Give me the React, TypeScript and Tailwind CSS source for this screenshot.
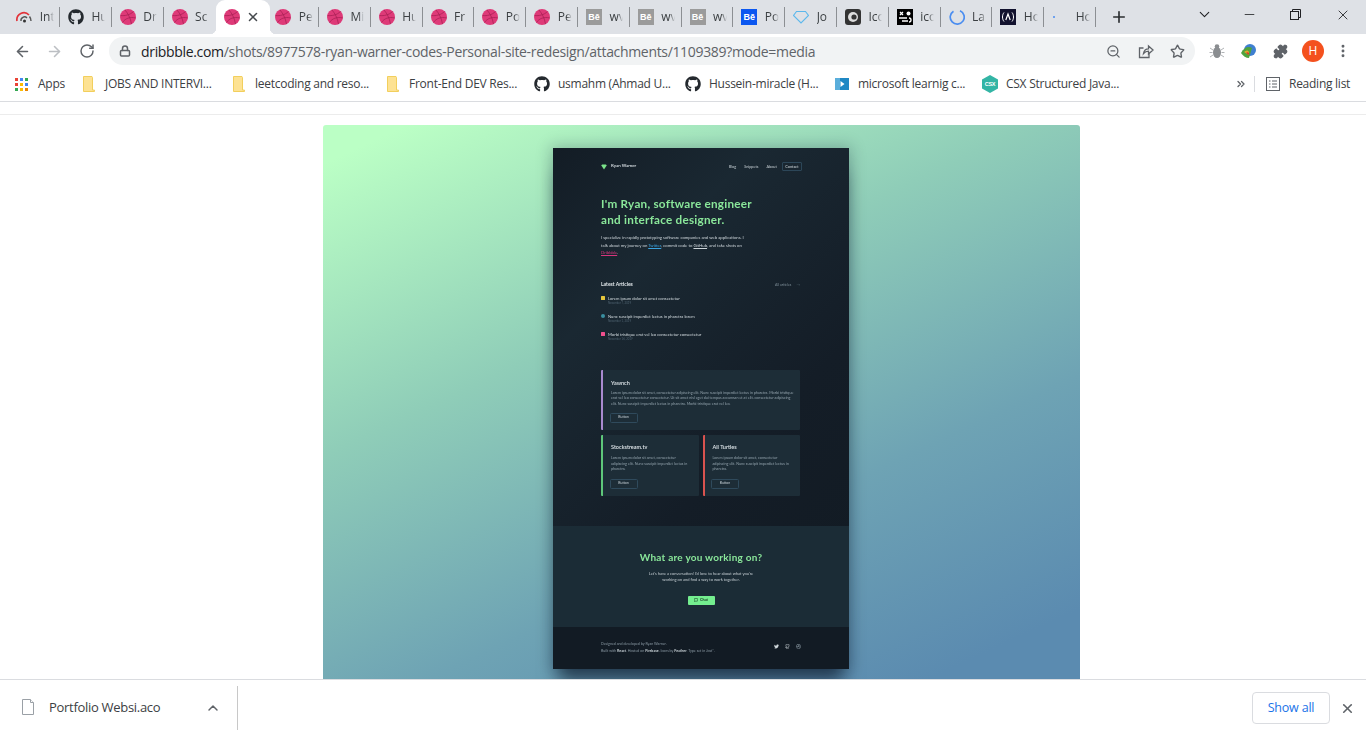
import React from "react";
import { FaGithub, FaTwitter, FaDribbble } from "react-icons/fa";
import { ArrowLeft, ArrowRight, RotateCw, Lock, ZoomOut, Star, Puzzle, MoreVertical, ChevronDown, ChevronUp, Minus, X, Plus, ChevronsRight, MessageSquare, Github } from "lucide-react";

const Dribbble = () => (
  <svg width="16" height="16" viewBox="0 0 16 16" className="shrink-0">
    <circle cx="8" cy="8" r="8" fill="#de3a78" />
    <g fill="none" stroke="#a92155" strokeWidth="0.8">
      <path d="M5 1C8 4.5 10.5 9 11.5 15" />
      <path d="M.5 6.5C5 7 10 6 13.5 2.5" />
      <path d="M2.5 13.5C5 9.5 10 7.5 15.8 9" />
    </g>
  </svg>
);
const Be = ({ bg }: { bg: string }) => (
  <span style={{ backgroundColor: bg }} className="w-4 h-4 shrink-0 flex items-center justify-center text-white text-[9px] font-bold leading-none font-['Liberation_Sans',sans-serif]">Bē</span>
);
const Gauge = () => (
  <svg width="16" height="16" viewBox="0 0 16 16" className="shrink-0">
    <path d="M1 12A7 7 0 0 1 13 6" fill="none" stroke="#e2333a" strokeWidth="1.7" />
    <path d="M5 12A3.5 3.5 0 0 1 11 9M13.5 7.5A7 7 0 0 1 15 12" fill="none" stroke="#555" strokeWidth="1.4" />
    <circle cx="8.5" cy="12" r="1.5" fill="#333" />
  </svg>
);
const Gh = ({ s = 16 }: { s?: number }) => <FaGithub size={s} color="#24292e" className="shrink-0" />;
const Diamond = () => (
  <svg width="16" height="16" viewBox="0 0 16 16" className="shrink-0">
    <path d="M3.5 2.5h9L15.5 6.5 8 14 .5 6.5z" fill="none" stroke="#5cb8ec" strokeWidth="1.1" />
  </svg>
);
const IcoDark = () => (
  <svg width="16" height="16" viewBox="0 0 16 16" className="shrink-0">
    <rect width="16" height="16" rx="3" fill="#333" />
    <circle cx="8" cy="8" r="5" fill="#ddd" />
    <circle cx="9" cy="8" r="2.6" fill="#333" />
  </svg>
);
const IcoBlack = () => (
  <svg width="16" height="16" viewBox="0 0 16 16" className="shrink-0">
    <rect width="16" height="16" fill="#000" />
    <path d="M3 3l3 3M6 3L3 6M2 9h8M5 12h6" stroke="#fff" strokeWidth="1.3" />
    <circle cx="11.5" cy="4.5" r="2" fill="#fff" />
    <path d="M12 9a2 2 0 0 1 0 4" stroke="#fff" strokeWidth="1.3" fill="none" />
  </svg>
);
const Spinner = () => (
  <svg width="16" height="16" viewBox="0 0 16 16" className="shrink-0">
    <path d="M4.5 2.2A7 7 0 1 0 11 1.7" fill="none" stroke="#4a8df0" strokeWidth="1.7" />
  </svg>
);
const Ho = () => (
  <svg width="16" height="16" viewBox="0 0 16 16" className="shrink-0">
    <rect width="16" height="16" fill="#12122e" />
    <path d="M4 3.5C2 6 2 10 4 12.5M12 3.5C14 6 14 10 12 12.5" stroke="#fff" fill="none" strokeWidth="1" />
    <path d="M5.8 11L8 5l2.2 6" stroke="#fff" fill="none" strokeWidth="1.2" />
  </svg>
);
const Dot = () => (
  <span className="w-4 h-4 shrink-0 flex items-center pl-px">
    <span className="w-[2px] h-[2px] rounded-full bg-[#4a8df0]" />
  </span>
);

const tabs: { icon: React.ReactNode; label: string }[] = [
  { icon: <Gauge />, label: "Int" },
  { icon: <Gh />, label: "Hu" },
  { icon: <Dribbble />, label: "Dr" },
  { icon: <Dribbble />, label: "Sc" },
  { icon: <Dribbble />, label: "" },
  { icon: <Dribbble />, label: "Pe" },
  { icon: <Dribbble />, label: "Mi" },
  { icon: <Dribbble />, label: "Hu" },
  { icon: <Dribbble />, label: "Fr" },
  { icon: <Dribbble />, label: "Po" },
  { icon: <Dribbble />, label: "Pe" },
  { icon: <Be bg="#9b9b9b" />, label: "wv" },
  { icon: <Be bg="#9b9b9b" />, label: "wv" },
  { icon: <Be bg="#9b9b9b" />, label: "wv" },
  { icon: <Be bg="#0b57f0" />, label: "Po" },
  { icon: <Diamond />, label: "Jo" },
  { icon: <IcoDark />, label: "Ico" },
  { icon: <IcoBlack />, label: "ico" },
  { icon: <Spinner />, label: "La" },
  { icon: <Ho />, label: "Ho" },
  { icon: <Dot />, label: "Ho" },
];

const Folder = () => (
  <svg width="12" height="16" viewBox="0 0 12 16" className="shrink-0">
    <path d="M.5.5h8.5l.5 1V14l2 .1v1.4H.5z" fill="#fde293" stroke="#f2cf5d" />
  </svg>
);
const AppsIcon = () => (
  <span className="grid grid-cols-3 gap-[2px] w-[13px] shrink-0">
    {["#ea4335", "#4285f4", "#34a853", "#ea4335", "#fbbc05", "#4285f4", "#34a853", "#fbbc05", "#ea8600"].map((c, i) => (
      <span key={i} style={{ backgroundColor: c }} className="w-[3px] h-[3px]" />
    ))}
  </span>
);
const Ms = () => (
  <svg width="14" height="12" viewBox="0 0 14 12" className="shrink-0">
    <rect width="14" height="12" fill="#1f88c4" />
    <rect x="0" y="0" width="5" height="12" fill="#5aaedb" />
    <path d="M5.5 3l4 3-4 3z" fill="#fff" />
  </svg>
);
const Csx = () => (
  <svg width="16" height="18" viewBox="0 0 16 18" className="shrink-0">
    <path d="M8 0l8 4.5v9L8 18l-8-4.5v-9z" fill="#33b5a5" />
    <text x="8" y="11" fontSize="5.5" fontWeight="700" fill="#fff" textAnchor="middle" fontFamily="Liberation Sans">CSX</text>
  </svg>
);

const bookmarks = [
  { icon: <AppsIcon />, label: "Apps", w: "w-[68px]", g: "gap-[10px]" },
  { icon: <Folder />, label: "JOBS AND INTERVI...", w: "w-[150px]", g: "gap-[10px]" },
  { icon: <Folder />, label: "leetcoding and reso...", w: "w-[154px]", g: "gap-[10px]" },
  { icon: <Folder />, label: "Front-End DEV Res...", w: "w-[147px]", g: "gap-[10px]" },
  { icon: <Gh />, label: "usmahm (Ahmad U...", w: "w-[151px]", g: "gap-[8px]" },
  { icon: <Gh />, label: "Hussein-miracle (H...", w: "w-[150px]", g: "gap-[8px]" },
  { icon: <Ms />, label: "microsoft learnig c...", w: "w-[147px]", g: "gap-[9px]" },
  { icon: <Csx />, label: "CSX Structured Java...", w: "w-[254px]", g: "gap-[8px]" },
];

const Btn = () => (
  <span className="w-[28px] h-[9.5px] rounded-[1.5px] border border-[#2f4a5c] flex items-center justify-center text-[3.5px] text-[#c6d0d6]">Button</span>
);

const Card = ({ title, border, tall, children }: { title: string; border: string; tall?: boolean; children: React.ReactNode }) => (
  <div className={`bg-[#1d2d37] rounded-[1px] border-l-2 flex flex-col pl-[6.5px] pr-[3px] ${tall ? "h-[60px] pt-[10px]" : "flex-1 h-[61px] pt-[9.5px]"} ${border}`}>
    <div className="pl-[1.5px] text-[5.5px] leading-[7px] font-semibold text-[#dfe6ea]">{title}</div>
    <div className={`pl-[1.5px] text-[3.7px] leading-[5.5px] text-[#93a3ad] whitespace-nowrap ${tall ? "mt-[3px]" : "mt-[4px]"}`}>{children}</div>
    <div className="mt-auto mb-[7px]"><Btn /></div>
  </div>
);

const Article = ({ color, round, title, date }: { color: string; round?: boolean; title: string; date: string }) => (
  <div className="flex flex-col h-[18px]">
    <div className="flex items-center gap-[3px]">
      <span style={{ backgroundColor: color }} className={`w-[4px] h-[4px] ${round ? "rounded-full" : "rounded-[0.5px]"}`} />
      <span className="text-[4.15px] leading-[5px] text-[#d5dde1]">{title}</span>
    </div>
    <div className="text-[2.8px] leading-[4px] text-[#506472] pl-[7px] mt-[0.5px]">{date}</div>
  </div>
);

const Mock = () => (
  <div className="w-[296px] h-[521px] shrink-0 mt-[23px] mr-[1px] flex flex-col shadow-[0_18px_16px_-6px_rgba(15,30,50,0.7),0_0_14px_2px_rgba(15,30,50,0.25)] font-['Lato',sans-serif] blur-[0.4px] overflow-hidden bg-[linear-gradient(135deg,#131c25_0%,#1a2832_25%,#141d27_60%,#111a22_100%)]">
    <div className="h-[378px] pl-[48px] pr-[47px] flex flex-col">
      <div className="flex items-center h-[9px] mt-[14px]">
        <svg width="6" height="6" viewBox="0 0 6 6"><path d="M.2 1.2L1.2.4h3.6l1 .8L3 5.6z" fill="#7be38a" /></svg>
        <span className="text-[4.4px] font-semibold text-[#dde4e8] ml-[4px]">Ryan Warner</span>
        <span className="text-[3.8px] text-[#c5ced3] ml-auto">Blog</span>
        <span className="text-[3.8px] text-[#c5ced3] ml-[8px]">Snippets</span>
        <span className="text-[3.8px] text-[#c5ced3] ml-[8px]">About</span>
        <span className="text-[3.8px] text-[#d5dde1] ml-[5px] px-[2.5px] h-[9px] flex items-center rounded-[1px] border border-[#2c4658]">Contact</span>
      </div>
      <h1 className="mt-[25px] text-[11.7px] leading-[15.5px] font-bold tracking-[0.25px] text-[#8ae79a] whitespace-nowrap">
        I'm Ryan, software engineer<br />and interface designer.
      </h1>
      <p className="mt-[7px] text-[4.25px] leading-[7.6px] text-[#cdd5da] whitespace-nowrap">
        I specialize in rapidly prototyping software companies and web applications. I<br />
        talk about my journey on <span className="text-[#3aa3e0] underline">Twitter</span>, commit code to{" "}
        <span className="underline">GitHub</span>, and take shots on<br />
        <span className="text-[#d6357c] underline">Dribbble</span>.
      </p>
      <div className="flex items-center mt-[25px] h-[6px] pr-[2px]">
        <span className="text-[5px] font-bold text-[#e3e9ec]">Latest Articles</span>
        <span className="text-[3.6px] text-[#7e8e98] ml-auto">All articles</span>
        <span className="text-[3.6px] text-[#4e5f6b] ml-[5px]">→</span>
      </div>
      <div className="flex flex-col mt-[8px]">
        <Article color="#e6c63c" title="Lorem ipsum dolor sit amet consectetur" date="November 7, 2019" />
        <Article color="#3a8fa0" round title="Nunc suscipit imperdiet lectus in pharetra lorem" date="November 1, 2019" />
        <Article color="#f0508e" title="Morbi tristique erat vel leo consectetur consectetur" date="November 16, 2019" />
      </div>
      <div className="flex flex-col gap-[5px] mt-[20px] mr-[2px]">
        <Card tall title="Yawnch" border="border-[#a98ad0]">
          Lorem ipsum dolor sit amet, consectetur adipiscing elit. Nunc suscipit imperdiet lectus in pharetra. Morbi tristique<br />
          erat vel leo consectetur consectetur. Ut sit amet nisl eget dui tempus accumsan et at elit. consectetur adipiscing<br />
          elit. Nunc suscipit imperdiet lectus in pharetra. Morbi tristique erat vel leo.
        </Card>
        <div className="flex gap-[4px]">
          <Card title="Stockstream.tv" border="border-[#5ec77a]">
            Lorem ipsum dolor sit amet, consectetur<br />adipiscing elit. Nunc suscipit imperdiet lectus in<br />pharetra.
          </Card>
          <Card title="All Turtles" border="border-[#d9534f]">
            Lorem ipsum dolor sit amet, consectetur<br />adipiscing elit. Nunc suscipit imperdiet lectus in<br />pharetra.
          </Card>
        </div>
      </div>
    </div>
    <div className="h-[101px] bg-[#1b2c36] flex flex-col items-center">
      <div className="mt-[24px] text-[10px] leading-[14px] font-bold tracking-[0.25px] text-[#8ae79a]">What are you working on?</div>
      <div className="mt-[6.5px] text-[4px] leading-[6.6px] text-[#c5ced3] text-center whitespace-nowrap">
        Let's have a conversation! I'd love to hear about what you're<br />working on and find a way to work together.
      </div>
      <div className="mt-[12px] w-[27px] h-[9px] rounded-[1px] bg-[#74ee8f] flex items-center justify-center gap-[2px] text-[3.8px] font-bold text-[#14301f]">
        <MessageSquare size={4} strokeWidth={3} />Chat
      </div>
    </div>
    <div className="flex-1 bg-[#121b24] pl-[48px] pr-[47px] pt-[13px] flex justify-between">
      <div className="text-[3.6px] leading-[7px] text-[#8a99a3]">
        <div>Designed and developed by Ryan Warner.</div>
        <div>Built with <b className="text-[#c5ced3]">React</b>. Hosted on <b className="text-[#c5ced3]">Firebase</b>. Icons by <b className="text-[#c5ced3]">Feather</b>. Type set in Jost*.</div>
      </div>
      <div className="flex items-center gap-[6px] h-[7px] mt-[3px] mr-[1px] text-[#cfd7db]">
        <FaTwitter size={5} />
        <Github size={5} strokeWidth={2.5} />
        <FaDribbble size={5} color="#8a99a3" />
      </div>
    </div>
  </div>
);

export default function App() {
  return (
    <div className="w-[1366px] h-[736px] overflow-hidden bg-white flex flex-col font-['Open_Sans',sans-serif] text-[#3c4043]">
      {/* tab strip */}
      <div className="h-[34px] bg-[#dee1e6] flex items-center pl-[8.2px] shrink-0">
        {tabs.map((t, i) => {
          const active = i === 4;
          const noSep = i === 3 || i === 4;
          return active ? (
            <div key={i} className="relative z-10 ml-[0.6px] mr-[-2.8px] w-[54px] h-[34px] bg-white rounded-t-[9px] flex items-center pl-[8px] gap-[6px] self-end">
              <span className="absolute left-[-6px] bottom-0 w-[6px] h-[6px] bg-[radial-gradient(circle_at_0_0,#dee1e6_6px,#fff_6.5px)]" />
              <span className="absolute right-[-6px] bottom-0 w-[6px] h-[6px] bg-[radial-gradient(circle_at_100%_0,#dee1e6_6px,#fff_6.5px)]" />
              {t.icon}
              <X size={14} strokeWidth={2.6} className="text-[#45494d]" />
            </div>
          ) : (
            <div key={i} className={`w-[51.8px] h-[20px] flex items-center pl-[8px] gap-[7.5px] border-r ${noSep ? "border-transparent" : "border-[#8c8f93]"}`}>
              {t.icon}
              <span className="text-[12px] w-[14px] overflow-hidden whitespace-nowrap [mask-image:linear-gradient(90deg,#000_60%,transparent)]">{t.label}</span>
            </div>
          );
        })}
        <Plus size={18} strokeWidth={2.2} className="ml-[14px] text-[#2b2e31]" />
        <div className="ml-auto flex items-center text-[#202124] mb-[5px]">
          <ChevronDown size={17} strokeWidth={1.5} className="mr-[29px]" />
          <Minus size={15} strokeWidth={1.3} className="mr-[33px]" />
          <svg width="11" height="11" viewBox="0 0 11 11" fill="none" stroke="currentColor" className="mr-[34px]">
            <rect x=".5" y="2.5" width="8" height="8" />
            <path d="M2.5 2.5v-2h8v8h-2" />
          </svg>
          <X size={16} strokeWidth={1.3} className="mr-[15px]" />
        </div>
      </div>
      {/* toolbar */}
      <div className="h-[34px] bg-white flex items-center pl-[14px] shrink-0">
        <ArrowLeft size={17} strokeWidth={2.2} className="text-[#5f6368]" />
        <ArrowRight size={17} strokeWidth={2.2} className="text-[#bcbfc3] ml-[15px]" />
        <RotateCw size={16} strokeWidth={2.2} className="text-[#5f6368] ml-[16px]" />
        <div className="ml-[14px] w-[1086px] h-[28px] rounded-full bg-[#f1f3f4] flex items-center pl-[10px] pr-[10px]">
          <Lock size={12} strokeWidth={3} className="text-[#5f6368]" />
          <span className="ml-[10px] text-[14px] tracking-[-0.33px] whitespace-nowrap text-[#5f6368]">
            <span className="text-[#202124]">dribbble.com</span>/shots/8977578-ryan-warner-codes-Personal-site-redesign/attachments/1109389?mode=media
          </span>
          <ZoomOut size={15} className="ml-auto text-[#5f6368]" />
          <svg width="16" height="15" viewBox="0 0 16 15" fill="none" stroke="#5f6368" strokeWidth="1.3" className="ml-[17px]">
            <path d="M11 9.5v4H1.5V4h4" />
            <path d="M5.5 9.5C6 6.5 8 4.8 10.5 4.8V2l4.5 4-4.5 4V7.2C8.5 7.2 6.8 8 5.5 9.5z" />
          </svg>
          <Star size={15} strokeWidth={2.2} className="ml-[16px] text-[#5f6368]" />
        </div>
        <svg width="16" height="16" viewBox="0 0 16 16" className="ml-[14px]">
          <ellipse cx="8" cy="9.5" rx="4" ry="5.5" fill="#8a8d90" />
          <circle cx="8" cy="3.5" r="2.3" fill="#8a8d90" />
          <path d="M1 5l3 2M15 5l-3 2M.5 9.5h3M15.5 9.5h-3M1 14l3-2M15 14l-3-2" stroke="#b0b3b6" />
        </svg>
        <svg width="16" height="16" viewBox="0 0 16 16" className="ml-[16px]">
          <circle cx="9" cy="7" r="6" fill="#3f7fd0" />
          <path d="M0 10C3 4 8 3 11 5L8 15C5 15 2 13 0 10z" fill="#4fa33c" />
          <path d="M3 9c2-2 4-2 5 0v3z" fill="#e2a32b" />
          <path d="M5 10c1-1 2-1 3 0v2z" fill="#d33b2c" />
        </svg>
        <Puzzle size={15} fill="#5f6368" className="ml-[16px] text-[#5f6368]" />
        <span className="ml-[14px] w-[22px] h-[22px] rounded-full bg-[#f4511e] text-white text-[12px] flex items-center justify-center">H</span>
        <MoreVertical size={16} strokeWidth={2.4} className="ml-[11px] text-[#5f6368]" />
      </div>
      {/* bookmarks */}
      <div className="h-[34px] bg-white border-b border-[#dadce0] flex items-center pl-[15px] pb-[1px] shrink-0">
        {bookmarks.map((b, i) => (
          <div key={i} className={`${b.w} ${b.g} flex items-center shrink-0 text-[12px] tracking-[-0.26px] whitespace-nowrap`}>
            {b.icon}
            <span>{b.label}</span>
          </div>
        ))}
        <ChevronsRight size={12} strokeWidth={2.6} className="text-[#5f6368] ml-[-1px]" />
        <span className="w-px h-[16px] bg-[#dadce0] ml-[7px]" />
        <svg width="14" height="14" viewBox="0 0 14 14" className="ml-[11px]" fill="none" stroke="#5f6368">
          <rect x=".5" y=".5" width="13" height="13" />
          <path d="M3 4h1.5M6 4h5M3 7h1.5M6 7h5M3 10h1.5M6 10h5" />
        </svg>
        <span className="ml-[9px] text-[12px] tracking-[-0.26px] whitespace-nowrap">Reading list</span>
      </div>
      {/* page */}
      <div className="flex-1 min-h-0 overflow-hidden bg-white">
        <div className="h-[13px] border-b border-[#ececec]" />
        <div className="mt-[10px] ml-[323px] w-[757px] h-[620px] rounded-t-[3px] flex flex-col items-center bg-[linear-gradient(155deg,#bbffc5_4%,#8fcdb8_34%,#6ea3b4_62%,#5b8bb0_86%)]">
          <Mock />
        </div>
      </div>
      {/* download bar */}
      <div className="h-[57px] bg-white border-t border-[#dadce0] flex items-center shrink-0">
        <svg width="12" height="16" viewBox="0 0 12 16" className="ml-[22px] mb-[2px]" fill="#fff" stroke="#9aa0a6">
          <path d="M.5.5h8l3 3v12H.5z" />
          <path d="M8.5.5v3h3" />
        </svg>
        <span className="ml-[15px] text-[13px] tracking-[-0.3px] whitespace-nowrap w-[156px]">Portfolio Websi.aco</span>
        <ChevronUp size={16} strokeWidth={2.2} className="text-[#5f6368]" />
        <span className="w-px h-[44px] bg-[#c8c8c8] ml-[16px]" />
        <span className="ml-auto w-[78px] h-[32px] rounded-[4px] border border-[#dadce0] flex items-center justify-center text-[12.5px] font-medium text-[#1a73e8] tracking-[-0.2px]">Show all</span>
        <X size={15} strokeWidth={2.6} className="ml-[10px] mr-[11px] text-[#5f6368]" />
      </div>
    </div>
  );
}
